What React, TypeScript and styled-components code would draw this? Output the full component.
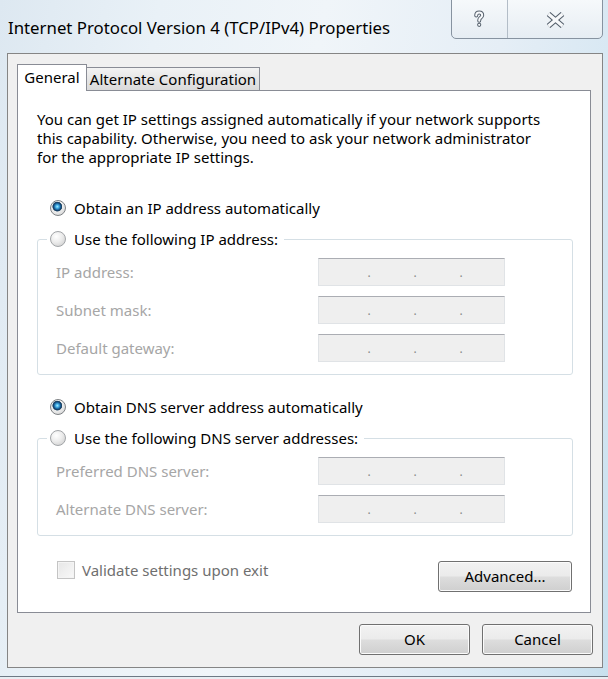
import React from "react";
import styled, { createGlobalStyle } from "styled-components";

const GlobalStyle = createGlobalStyle`
  html, body {
    margin: 0;
    padding: 0;
    background: #e3edf5;
  }
  body {
    font-family: "Noto Sans", "Open Sans", sans-serif;
  }
`;

export default function App() {
  return (
    <>
      <GlobalStyle />
      <Window>
        <TitleBar>
          <Title>Internet Protocol Version 4 (TCP/IPv4) Properties</Title>
          <CaptionBox>
            <CaptionButton $w={55}>
              <HelpIcon />
            </CaptionButton>
            <CaptionButton $w={94} $divider>
              <CloseIcon />
            </CaptionButton>
          </CaptionBox>
        </TitleBar>

        <Client>
          <TabRow>
            <Tab $active $w={70}>General</Tab>
            <Tab $w={173}>Alternate Configuration</Tab>
          </TabRow>

          <Panel>
            <Intro>
              You can get IP settings assigned automatically if your network supports
              this capability. Otherwise, you need to ask your network administrator
              for the appropriate IP settings.
            </Intro>

            <RadioLine $top={29} $inset={13}>
              <Radio $checked />
              Obtain an IP address automatically
            </RadioLine>

            <Group>
              <GroupLegend>
                <RadioLine $inset={0}>
                  <Radio />
                  Use the following IP address:
                </RadioLine>
              </GroupLegend>
              <FieldGrid>
                <FieldLabel>IP address:</FieldLabel>
                <IpBox />
                <FieldLabel>Subnet mask:</FieldLabel>
                <IpBox />
                <FieldLabel>Default gateway:</FieldLabel>
                <IpBox />
              </FieldGrid>
            </Group>

            <RadioLine $top={20} $inset={13}>
              <Radio $checked />
              Obtain DNS server address automatically
            </RadioLine>

            <Group>
              <GroupLegend>
                <RadioLine $inset={0}>
                  <Radio />
                  Use the following DNS server addresses:
                </RadioLine>
              </GroupLegend>
              <FieldGrid>
                <FieldLabel>Preferred DNS server:</FieldLabel>
                <IpBox />
                <FieldLabel>Alternate DNS server:</FieldLabel>
                <IpBox />
              </FieldGrid>
            </Group>

            <BottomRow>
              <CheckLine>
                <CheckBox />
                Validate settings upon exit
              </CheckLine>
              <Button $w={134}>Advanced...</Button>
            </BottomRow>
          </Panel>

          <Footer>
            <Button $w={111}>OK</Button>
            <Button $w={111}>Cancel</Button>
          </Footer>
        </Client>
      </Window>
    </>
  );
}

function IpBox() {
  return (
    <IpField>
      <span />
      <IpDot>.</IpDot>
      <span />
      <IpDot>.</IpDot>
      <span />
      <IpDot>.</IpDot>
      <span />
    </IpField>
  );
}

function HelpIcon() {
  const d = "M3.2 5.6 C3.2 3.6 4.5 2.4 6.2 2.4 C8 2.4 9.2 3.5 9.2 5.2 C9.2 6.9 7.8 7.5 7 8.3 C6.4 8.9 6.2 9.5 6.2 10.8";
  return (
    <svg width="13" height="19" viewBox="0 0 13 19">
      <path d={d} fill="none" stroke="#56616d" strokeWidth="4" strokeLinecap="round" />
      <circle cx="6.2" cy="14.8" r="2.1" fill="#56616d" />
      <path d={d} fill="none" stroke="#f7f9fb" strokeWidth="2" strokeLinecap="round" />
      <circle cx="6.2" cy="14.8" r="1.1" fill="#f7f9fb" />
    </svg>
  );
}

function CloseIcon() {
  return (
    <svg width="21" height="16" viewBox="0 0 21 16">
      <path d="M3.5 2 L17.5 14 M17.5 2 L3.5 14" stroke="#56616d" strokeWidth="5.4" />
      <path d="M3.5 2 L17.5 14 M17.5 2 L3.5 14" stroke="#f7f9fb" strokeWidth="3.2" />
    </svg>
  );
}

const Window = styled.div`
  width: 608px;
  height: 679px;
  display: flex;
  flex-direction: column;
  overflow: hidden;
  background: linear-gradient(
    100deg,
    #dde8f1 0%,
    #e9f1f7 22%,
    #f0f5f9 45%,
    #e5eef6 70%,
    #d4e6f2 90%,
    #c8e0ee 100%
  );
  box-shadow: inset 0 -2px 0 #e8eef3, inset 0 -3px 0 #6d7985;
`;

const TitleBar = styled.div`
  height: 53px;
  display: flex;
  justify-content: space-between;
  align-items: flex-start;
  flex-shrink: 0;
`;

const Title = styled.div`
  margin-top: 18px;
  padding-left: 8px;
  font-size: 16.8px;
  line-height: 20px;
  color: #000;
  white-space: nowrap;
`;

const CaptionBox = styled.div`
  display: flex;
  margin-top: -1px;
  margin-right: 5px;
  height: 40px;
  box-sizing: border-box;
  border: 1px solid #8793a0;
  border-radius: 0 0 5px 5px;
  background: linear-gradient(#f6f9fb, #e6edf3);
  overflow: hidden;
`;

const CaptionButton = styled.div<{ $w: number; $divider?: boolean }>`
  width: ${(p) => p.$w}px;
  display: flex;
  align-items: center;
  justify-content: center;
  padding-top: 1px;
  border-left: ${(p) => (p.$divider ? "1px solid #b3bdc7" : "none")};
`;

const Client = styled.div`
  margin: 0 5px 11px 7px;
  border: 1px solid #858585;
  background: #f0f0f0;
  padding: 10px 11px 12px 9px;
  display: flex;
  flex-direction: column;
`;

const TabRow = styled.div`
  display: flex;
  align-items: flex-end;
  margin-bottom: -1px;
  position: relative;
  z-index: 1;
`;

const Tab = styled.div<{ $active?: boolean; $w: number }>`
  box-sizing: border-box;
  width: ${(p) => p.$w}px;
  height: ${(p) => (p.$active ? 27 : 24)}px;
  display: flex;
  align-items: center;
  justify-content: center;
  padding-bottom: ${(p) => (p.$active ? 2 : 0)}px;
  font-size: 15px;
  color: #000;
  border: 1px solid #898c95;
  border-left: ${(p) => (p.$active ? "1px solid #898c95" : "none")};
  border-bottom: ${(p) => (p.$active ? "none" : "1px solid #898c95")};
  background: ${(p) =>
    p.$active ? "#ffffff" : "linear-gradient(#f3f3f3, #e6e6e6 50%, #dadada)"};
  white-space: nowrap;
`;

const Panel = styled.div`
  background: #fff;
  border: 1px solid #898c95;
  padding: 19px 17px 20px 19px;
`;

const Intro = styled.p`
  margin: 0;
  max-width: 512px;
  font-size: 15px;
  line-height: 19px;
  color: #000;
`;

const RadioLine = styled.div<{ $top?: number; $inset: number }>`
  display: flex;
  align-items: center;
  gap: 8px;
  height: 24px;
  margin-top: ${(p) => p.$top ?? 0}px;
  padding-left: ${(p) => p.$inset}px;
  font-size: 15px;
  color: #000;
  white-space: nowrap;
`;

const Radio = styled.span<{ $checked?: boolean }>`
  box-sizing: border-box;
  width: 16px;
  height: 16px;
  flex-shrink: 0;
  border-radius: 50%;
  border: 1px solid ${(p) => (p.$checked ? "#7e8285" : "#a2a5a8")};
  background: ${(p) =>
    p.$checked
      ? `radial-gradient(circle at 45% 40%, #a8ecff 0, #45b2e8 1.6px, #1f6aa4 3px, #123e66 4px, #31536f 4.6px, transparent 5.2px),
         radial-gradient(circle at 40% 35%, #ffffff, #e6e6e6 60%, #c9c9c9)`
      : `radial-gradient(circle at 38% 32%, #ffffff, #ececec 45%, #d2d2d2 85%, #c4c4c4)`};
`;

const Group = styled.fieldset`
  margin: 7px 0 0;
  padding: 7px 0 12px 9px;
  border: 1px solid #d5dfe5;
  border-radius: 3px;
  min-width: 0;
`;

const GroupLegend = styled.legend`
  padding: 0 6px 0 3px;
`;

const FieldGrid = styled.div`
  display: grid;
  grid-template-columns: 262px 187px;
  row-gap: 10px;
  align-items: center;
  margin-left: 9px;
`;

const FieldLabel = styled.div`
  font-size: 15px;
  color: #a6a6a6;
  white-space: nowrap;
`;

const IpField = styled.div`
  box-sizing: border-box;
  height: 28px;
  background: #efefef;
  border: 1px solid #e0e3e6;
  border-top-color: #abadb3;
  display: grid;
  grid-template-columns: 48px 4px 42px 4px 42px 4px 1fr;
  align-items: center;
`;

const IpDot = styled.span`
  font-size: 12px;
  line-height: 12px;
  color: #8a8a8a;
  text-align: center;
  padding-top: 2px;
`;

const BottomRow = styled.div`
  display: flex;
  justify-content: space-between;
  align-items: flex-start;
  margin-top: 25px;
  padding-left: 20px;
  padding-right: 1px;
`;

const CheckLine = styled.div`
  display: flex;
  align-items: center;
  gap: 7px;
  height: 18px;
  font-size: 15px;
  color: #6f6f6f;
  white-space: nowrap;
`;

const CheckBox = styled.span`
  box-sizing: border-box;
  width: 18px;
  height: 18px;
  border: 1px solid #c4c4c4;
  background: linear-gradient(135deg, #e6e6e6, #f9f9f9);
  box-shadow: inset 0 0 0 1px #f4f4f4;
`;

const Button = styled.button<{ $w: number }>`
  box-sizing: border-box;
  width: ${(p) => p.$w}px;
  height: 31px;
  padding: 0 0 2px;
  border: 1px solid #707070;
  border-radius: 3px;
  background: linear-gradient(#f2f2f2 0%, #ebebeb 48%, #dddddd 52%, #cfcfcf 100%);
  box-shadow: inset 0 0 0 1px #fbfbfb;
  font-family: "Noto Sans", "Open Sans", sans-serif;
  font-size: 15px;
  color: #000;
`;

const Footer = styled.div`
  display: flex;
  justify-content: flex-end;
  gap: 12px;
  margin-top: 11px;
  margin-right: -2px;
`;
